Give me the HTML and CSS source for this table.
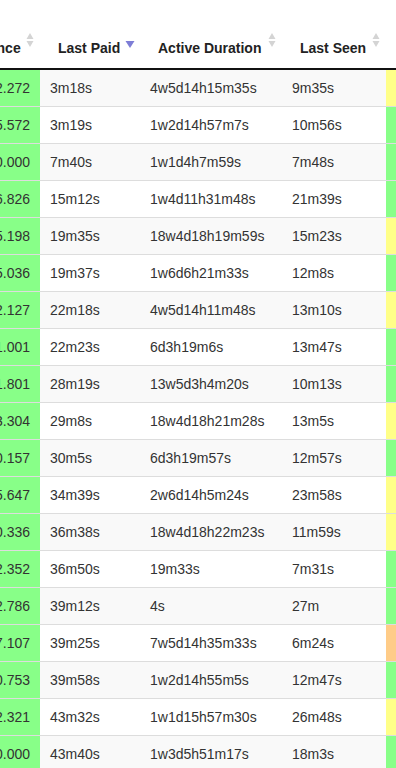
FILE: index.html
```html
<!DOCTYPE html>
<html>
<head>
<meta charset="utf-8">
<link rel="stylesheet" href="styles.css">
</head>
<body>
<div class="viewport">
<table class="grid">
<colgroup>
<col class="c-bal"><col class="c-paid"><col class="c-dur"><col class="c-seen"><col class="c-stat">
</colgroup>
<thead>
<tr>
<th><span>Balance</span><svg class="sort" width="8" height="15" viewBox="0 0 8 15"><path d="M4 0 L7.5 6 L0.5 6 Z M0.5 8 L7.5 8 L4 14 Z" fill="#d4d4d4"/></svg></th>
<th><span>Last Paid</span><svg class="sort desc" width="10" height="15" viewBox="0 0 10 15"><path d="M0.5 8 L9.5 8 L5 15 Z" fill="#7d7dd6"/></svg></th>
<th><span>Active Duration</span><svg class="sort" width="8" height="15" viewBox="0 0 8 15"><path d="M4 0 L7.5 6 L0.5 6 Z M0.5 8 L7.5 8 L4 14 Z" fill="#d4d4d4"/></svg></th>
<th><span>Last Seen</span><svg class="sort" width="8" height="15" viewBox="0 0 8 15"><path d="M4 0 L7.5 6 L0.5 6 Z M0.5 8 L7.5 8 L4 14 Z" fill="#d4d4d4"/></svg></th>
<th></th>
</tr>
</thead>
<tbody>
<tr><td class="num ok">12.272</td><td>3m18s</td><td>4w5d14h15m35s</td><td>9m35s</td><td class="warn"></td></tr>
<tr><td class="num ok">15.572</td><td>3m19s</td><td>1w2d14h57m7s</td><td>10m56s</td><td class="ok"></td></tr>
<tr><td class="num ok">10.000</td><td>7m40s</td><td>1w1d4h7m59s</td><td>7m48s</td><td class="ok"></td></tr>
<tr><td class="num ok">16.826</td><td>15m12s</td><td>1w4d11h31m48s</td><td>21m39s</td><td class="ok"></td></tr>
<tr><td class="num ok">15.198</td><td>19m35s</td><td>18w4d18h19m59s</td><td>15m23s</td><td class="warn"></td></tr>
<tr><td class="num ok">15.036</td><td>19m37s</td><td>1w6d6h21m33s</td><td>12m8s</td><td class="ok"></td></tr>
<tr><td class="num ok">12.127</td><td>22m18s</td><td>4w5d14h11m48s</td><td>13m10s</td><td class="warn"></td></tr>
<tr><td class="num ok">11.001</td><td>22m23s</td><td>6d3h19m6s</td><td>13m47s</td><td class="ok"></td></tr>
<tr><td class="num ok">11.801</td><td>28m19s</td><td>13w5d3h4m20s</td><td>10m13s</td><td class="ok"></td></tr>
<tr><td class="num ok">13.304</td><td>29m8s</td><td>18w4d18h21m28s</td><td>13m5s</td><td class="warn"></td></tr>
<tr><td class="num ok">10.157</td><td>30m5s</td><td>6d3h19m57s</td><td>12m57s</td><td class="ok"></td></tr>
<tr><td class="num ok">15.647</td><td>34m39s</td><td>2w6d14h5m24s</td><td>23m58s</td><td class="warn"></td></tr>
<tr><td class="num ok">10.336</td><td>36m38s</td><td>18w4d18h22m23s</td><td>11m59s</td><td class="warn"></td></tr>
<tr><td class="num ok">12.352</td><td>36m50s</td><td>19m33s</td><td>7m31s</td><td class="ok"></td></tr>
<tr><td class="num ok">12.786</td><td>39m12s</td><td>4s</td><td>27m</td><td class="ok"></td></tr>
<tr><td class="num ok">17.107</td><td>39m25s</td><td>7w5d14h35m33s</td><td>6m24s</td><td class="late"></td></tr>
<tr><td class="num ok">10.753</td><td>39m58s</td><td>1w2d14h55m5s</td><td>12m47s</td><td class="ok"></td></tr>
<tr><td class="num ok">12.321</td><td>43m32s</td><td>1w1d15h57m30s</td><td>26m48s</td><td class="warn"></td></tr>
<tr><td class="num ok">10.000</td><td>43m40s</td><td>1w3d5h51m17s</td><td>18m3s</td><td class="ok"></td></tr>
</tbody>
</table>
</div>
</body>
</html>
```

FILE: styles.css
```css
html, body {
  margin: 0;
  padding: 0;
  background: #fff;
}
body {
  font-family: "Liberation Sans", Arial, sans-serif;
  font-size: 14px;
  color: #333;
}
.viewport {
  width: 396px;
  height: 768px;
  overflow: hidden;
  padding-top: 28px;
  box-sizing: border-box;
}
.grid {
  table-layout: fixed;
  border-collapse: separate;
  border-spacing: 0;
  width: 497px;
  margin-left: -51px;
}
.c-bal { width: 91px; }
.c-paid { width: 100px; }
.c-dur { width: 142px; }
.c-seen { width: 104px; }
.c-stat { width: 60px; }
.grid th {
  position: relative;
  text-align: left;
  font-weight: bold;
  color: #222;
  line-height: 20px;
  padding: 10px 18px;
  border-bottom: 2px solid #111;
  white-space: nowrap;
  overflow: visible;
}
.grid th .sort {
  position: absolute;
  right: 6px;
  top: 5px;
}
.grid th .sort.desc {
  right: 5px;
}
.grid td {
  line-height: 20px;
  padding: 8px 10px;
  border-top: 1px solid #ddd;
  white-space: nowrap;
  overflow: hidden;
}
.grid tbody tr:first-child td {
  border-top: none;
}
.grid tbody tr:nth-child(odd) {
  background: #f9f9f9;
}
.grid td.num {
  text-align: right;
}
.grid td.ok { background: #88ff88; }
.grid td.warn { background: #ffff88; }
.grid td.late { background: #ffcc88; }
```
